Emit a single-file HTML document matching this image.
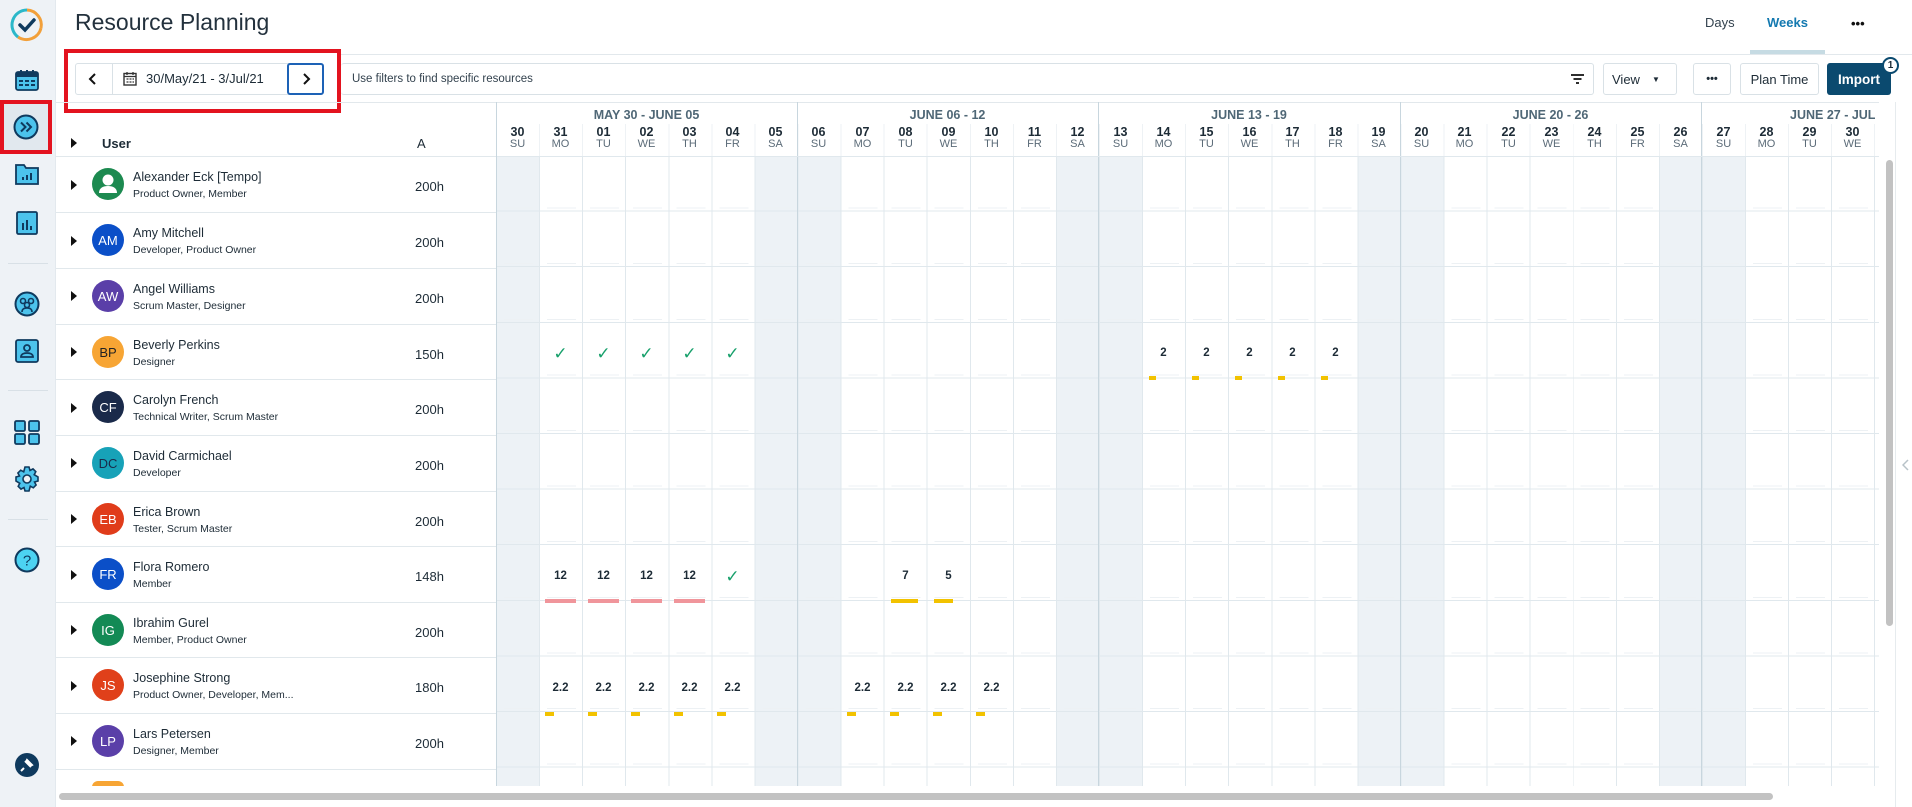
<!DOCTYPE html>
<html><head><meta charset="utf-8"><style>
*{box-sizing:border-box;margin:0;padding:0}
body{width:1912px;height:807px;overflow:hidden;background:#fff;font-family:"Liberation Sans",sans-serif;color:#1d2b36;position:relative}
.a{position:absolute}
.sb{left:0;top:0;width:56px;height:807px;background:#eef2f6;border-right:1px solid #e3e9ee}
.dv{left:8px;width:40px;height:1px;background:#d8e0e6}
.btn{border:1px solid #d9e1e6;border-radius:3px;background:#fff;font-size:14px;display:flex;align-items:center;justify-content:center}
.nm{font-size:12.5px;color:#1d2b36;left:133px}
.rl{font-size:10.5px;color:#1d2b36;left:133px}
.av{left:92px;width:32px;height:32px;border-radius:50%;color:#fff;font-size:13px;display:flex;align-items:center;justify-content:center}
.tri{left:71px;width:0;height:0;border-left:6px solid #111;border-top:5px solid transparent;border-bottom:5px solid transparent}
.hr{font-size:13px;left:415px}
.rowl{left:56px;width:440px;height:1px;background:#e1e8ec}
.dh{width:43px;text-align:center;top:126px;line-height:12px}
.dh b{display:block;font-size:12.5px;color:#1d2b36}
.dh span{display:block;font-size:11px;color:#5b6b78}
.wk{top:108px;font-size:12.5px;font-weight:bold;color:#4f6776;text-align:center}
.we{background:#edf2f6}
.val{width:43px;text-align:center;font-size:11.5px;font-weight:bold;color:#1d2b36}
.ck{width:43px;text-align:center;font-size:17px;color:#17a06b}
.bar{height:4px}
</style></head><body>

<!-- sidebar -->
<div class="a sb"></div>
<svg class="a" style="left:8px;top:6px" width="38" height="38" viewBox="0 0 38 38"><path d="M19 4 A15 15 0 0 1 33 22" stroke="#f2a03a" stroke-width="3" fill="none"/><path d="M33 22 A15 15 0 0 1 10 31" stroke="#f2a03a" stroke-width="3" fill="none"/><path d="M10 31 A15 15 0 0 1 19 4" stroke="#2bb8c9" stroke-width="3" fill="none"/><path d="M12 19 l5 5 l9 -10" stroke="#0f3a5e" stroke-width="3.5" fill="none" stroke-linecap="round"/></svg>
<svg class="a" style="left:15px;top:69px" width="24" height="22" viewBox="0 0 24 22"><rect x="1" y="3" width="22" height="18" rx="2" fill="#4cc3ec" stroke="#0f3a5e" stroke-width="1.8"/><rect x="1" y="3" width="22" height="5" fill="#0f3a5e"/><path d="M6 1v4M12 1v4M18 1v4" stroke="#0f3a5e" stroke-width="2"/><path d="M4 12h4M10 12h4M16 12h4M4 16h4M10 16h4M16 16h4" stroke="#0f3a5e" stroke-width="2"/></svg>
<div class="a" style="left:0;top:100px;width:52px;height:54px;border:4px solid #e3131f;background:#e1e8ee"></div>
<svg class="a" style="left:13px;top:114px" width="26" height="26" viewBox="0 0 26 26"><circle cx="13" cy="13" r="11.5" fill="#4cc3ec" stroke="#0f3a5e" stroke-width="2"/><path d="M8 8.5l4.5 4.5L8 17.5M13.5 8.5l4.5 4.5-4.5 4.5" stroke="#0f3a5e" stroke-width="2" fill="none"/></svg>
<svg class="a" style="left:15px;top:163px" width="24" height="22" viewBox="0 0 24 22"><path d="M1 2h8l2 3h12v16H1z" fill="#4cc3ec" stroke="#0f3a5e" stroke-width="1.8"/><path d="M8 17v-3M12 17v-5M16 17v-7" stroke="#0f3a5e" stroke-width="2"/></svg>
<svg class="a" style="left:16px;top:211px" width="22" height="24" viewBox="0 0 22 24"><rect x="1" y="1" width="20" height="22" rx="1.5" fill="#4cc3ec" stroke="#0f3a5e" stroke-width="1.8"/><path d="M7 19v-7M11 19v-10M15 19v-4" stroke="#0f3a5e" stroke-width="2"/></svg>
<div class="a dv" style="top:263px"></div>
<svg class="a" style="left:14px;top:291px" width="26" height="26" viewBox="0 0 26 26"><circle cx="13" cy="13" r="11.5" fill="#4cc3ec" stroke="#0f3a5e" stroke-width="2"/><circle cx="9" cy="10" r="2.5" fill="none" stroke="#0f3a5e" stroke-width="1.6"/><circle cx="17" cy="10" r="2.5" fill="none" stroke="#0f3a5e" stroke-width="1.6"/><circle cx="13" cy="14" r="2.5" fill="none" stroke="#0f3a5e" stroke-width="1.6"/><path d="M8 21c0-3 2-4 5-4s5 1 5 4" fill="none" stroke="#0f3a5e" stroke-width="1.6"/></svg>
<svg class="a" style="left:15px;top:339px" width="24" height="24" viewBox="0 0 24 24"><rect x="1" y="1" width="22" height="22" rx="2" fill="#4cc3ec" stroke="#0f3a5e" stroke-width="1.8"/><circle cx="12" cy="9" r="3" fill="none" stroke="#0f3a5e" stroke-width="1.8"/><path d="M6 18c0-3 3-4 6-4s6 1 6 4z" fill="none" stroke="#0f3a5e" stroke-width="1.8"/></svg>
<div class="a dv" style="top:390px"></div>
<svg class="a" style="left:14px;top:420px" width="26" height="25" viewBox="0 0 26 25"><rect x="1" y="1" width="10" height="10" rx="1.5" fill="#4cc3ec" stroke="#0f3a5e" stroke-width="1.8"/><rect x="15" y="1" width="10" height="10" rx="1.5" fill="#4cc3ec" stroke="#0f3a5e" stroke-width="1.8"/><rect x="1" y="14" width="10" height="10" rx="1.5" fill="#4cc3ec" stroke="#0f3a5e" stroke-width="1.8"/><rect x="15" y="14" width="10" height="10" rx="1.5" fill="#4cc3ec" stroke="#0f3a5e" stroke-width="1.8"/></svg>
<svg class="a" style="left:14px;top:466px" width="26" height="26" viewBox="0 0 26 26"><path d="M11 1h4l1 3.5 3-1.6 2.8 2.8-1.6 3L24 11v4l-3.5 1 1.6 3-2.8 2.8-3-1.6L15 25h-4l-1-3.5-3 1.6-2.8-2.8 1.6-3L2 15v-4l3.5-1-1.6-3 2.8-2.8 3 1.6z" fill="#4cc3ec" stroke="#0f3a5e" stroke-width="1.6"/><circle cx="13" cy="13" r="4" fill="#eef2f6" stroke="#0f3a5e" stroke-width="1.6"/></svg>
<div class="a dv" style="top:519px"></div>
<svg class="a" style="left:14px;top:547px" width="26" height="26" viewBox="0 0 26 26"><circle cx="13" cy="13" r="11.5" fill="#4cd3f2" stroke="#0f3a5e" stroke-width="2"/><text x="13" y="18.5" text-anchor="middle" font-size="15" font-family="Liberation Sans" fill="#0f3a5e">?</text></svg>
<svg class="a" style="left:15px;top:753px" width="24" height="24" viewBox="0 0 24 24"><circle cx="12" cy="12" r="12" fill="#0f3a5e"/><path d="M9 15l-3 3M10 8l6 6M12 7l5 5-2 1-4-4z" stroke="#fff" stroke-width="2" fill="#fff"/></svg>

<!-- title -->
<div class="a" style="left:75px;top:9px;font-size:23px;color:#23313d">Resource Planning</div>
<div class="a" style="left:1705px;top:15px;font-size:13px;color:#33424e">Days</div>
<div class="a" style="left:1767px;top:15px;font-size:13px;font-weight:bold;color:#1379b0">Weeks</div>
<div class="a" style="left:1851px;top:16px;font-size:13px;font-weight:bold;color:#111;letter-spacing:0px">•••</div>
<div class="a" style="left:341px;top:54px;width:1571px;height:1px;background:#e2e8ec"></div>
<div class="a" style="left:1750px;top:50px;width:75px;height:4px;background:#c6dbe3"></div>

<!-- toolbar -->
<div class="a" style="left:64px;top:49px;width:277px;height:64px;border:4px solid #e3131f"></div>
<div class="a btn" style="left:75px;top:63px;width:248px;height:32px"></div>
<div class="a" style="left:112px;top:64px;width:1px;height:30px;background:#d9e1e6"></div>
<svg class="a" style="left:86px;top:72px" width="14" height="14" viewBox="0 0 14 14"><path d="M9 2L4 7l5 5" stroke="#111" stroke-width="2" fill="none"/></svg>
<svg class="a" style="left:123px;top:71px" width="14" height="15" viewBox="0 0 14 15"><rect x="1" y="2.5" width="12" height="11.5" fill="none" stroke="#333" stroke-width="1.4"/><path d="M1 5.5h12M4 1v3M10 1v3M3.5 8h2M6.5 8h2M9.5 8h1.5M3.5 11h2M6.5 11h2M9.5 11h1.5" stroke="#333" stroke-width="1.3"/></svg>
<div class="a" style="left:146px;top:71px;font-size:13px;color:#1d2b36">30/May/21 - 3/Jul/21</div>
<div class="a" style="left:287px;top:63px;width:37px;height:32px;border:2px solid #1d62b6;border-radius:3px;background:#fff"></div>
<svg class="a" style="left:299px;top:72px" width="14" height="14" viewBox="0 0 14 14"><path d="M5 2l5 5-5 5" stroke="#111" stroke-width="2" fill="none"/></svg>
<div class="a btn" style="left:341px;top:63px;width:1253px;height:32px;border-left:none"></div>
<div class="a" style="left:352px;top:73px;font-size:11.5px;color:#33424e">Use filters to find specific resources</div>
<svg class="a" style="left:1571px;top:74px" width="13" height="10" viewBox="0 0 13 10"><path d="M0 1h13M2.5 5h8M5 9h3" stroke="#111" stroke-width="1.8"/></svg>
<div class="a btn" style="left:1603px;top:63px;width:74px;height:32px;font-size:13px;justify-content:flex-start;padding-left:8px">View<span style="font-size:8px;margin-left:12px">▼</span></div>
<div class="a btn" style="left:1693px;top:63px;width:38px;height:32px;font-size:11px;font-weight:bold">•••</div>
<div class="a btn" style="left:1740px;top:63px;width:79px;height:32px;font-size:13px">Plan Time</div>
<div class="a" style="left:1827px;top:63px;width:64px;height:32px;background:#0b4a6f;border-radius:3px;color:#fff;font-size:13.5px;font-weight:bold;display:flex;align-items:center;justify-content:center">Import</div>
<div class="a" style="left:1882px;top:57px;width:17px;height:17px;border-radius:50%;background:#fff;border:2px solid #0b4a6f;font-size:10px;font-weight:bold;display:flex;align-items:center;justify-content:center">1</div>
<div class="a" style="left:56px;top:102px;width:1823px;height:1px;background:#e2e8ec"></div>

<!-- left list -->
<div class="a tri" style="top:138px"></div>
<div class="a" style="left:102px;top:136px;font-size:13px;font-weight:bold">User</div>
<div class="a" style="left:417px;top:136px;font-size:13px">A</div>
<div class="a" style="left:496px;top:102px;width:1px;height:690px;background:#c8d6de"></div>
<div class="a rowl" style="top:156px"></div>

<div class="a tri" style="top:180px"></div><div class="a av" style="top:168px;background:#1c8a50"><svg width="32" height="32" viewBox="0 0 32 32"><circle cx="16" cy="12" r="5.5" fill="#fff"/><path d="M7 25c0-5 4-7 9-7s9 2 9 7z" fill="#fff"/></svg></div><div class="a nm" style="top:170px">Alexander Eck [Tempo]</div><div class="a rl" style="top:188px">Product Owner, Member</div><div class="a hr" style="top:179px">200h</div><div class="a rowl" style="top:212px"></div>
<div class="a tri" style="top:236px"></div><div class="a av" style="top:224px;background:#0b4fc8">AM</div><div class="a nm" style="top:226px">Amy Mitchell</div><div class="a rl" style="top:244px">Developer, Product Owner</div><div class="a hr" style="top:235px">200h</div><div class="a rowl" style="top:268px"></div>
<div class="a tri" style="top:291px"></div><div class="a av" style="top:280px;background:#5a3fa8">AW</div><div class="a nm" style="top:282px">Angel Williams</div><div class="a rl" style="top:300px">Scrum Master, Designer</div><div class="a hr" style="top:291px">200h</div><div class="a rowl" style="top:324px"></div>
<div class="a tri" style="top:347px"></div><div class="a av" style="top:336px;background:#f7a534;color:#222">BP</div><div class="a nm" style="top:338px">Beverly Perkins</div><div class="a rl" style="top:356px">Designer</div><div class="a hr" style="top:347px">150h</div><div class="a rowl" style="top:379px"></div>
<div class="a tri" style="top:403px"></div><div class="a av" style="top:391px;background:#1a2a4a">CF</div><div class="a nm" style="top:393px">Carolyn French</div><div class="a rl" style="top:411px">Technical Writer, Scrum Master</div><div class="a hr" style="top:402px">200h</div><div class="a rowl" style="top:435px"></div>
<div class="a tri" style="top:458px"></div><div class="a av" style="top:447px;background:#17a2b8;color:#1a2a4a">DC</div><div class="a nm" style="top:449px">David Carmichael</div><div class="a rl" style="top:467px">Developer</div><div class="a hr" style="top:458px">200h</div><div class="a rowl" style="top:491px"></div>
<div class="a tri" style="top:514px"></div><div class="a av" style="top:503px;background:#e03c1a">EB</div><div class="a nm" style="top:505px">Erica Brown</div><div class="a rl" style="top:523px">Tester, Scrum Master</div><div class="a hr" style="top:514px">200h</div><div class="a rowl" style="top:546px"></div>
<div class="a tri" style="top:570px"></div><div class="a av" style="top:558px;background:#0b4fc8">FR</div><div class="a nm" style="top:560px">Flora Romero</div><div class="a rl" style="top:578px">Member</div><div class="a hr" style="top:569px">148h</div><div class="a rowl" style="top:602px"></div>
<div class="a tri" style="top:625px"></div><div class="a av" style="top:614px;background:#138a55">IG</div><div class="a nm" style="top:616px">Ibrahim Gurel</div><div class="a rl" style="top:634px">Member, Product Owner</div><div class="a hr" style="top:625px">200h</div><div class="a rowl" style="top:657px"></div>
<div class="a tri" style="top:681px"></div><div class="a av" style="top:669px;background:#e0401a">JS</div><div class="a nm" style="top:671px">Josephine Strong</div><div class="a rl" style="top:689px">Product Owner, Developer, Mem...</div><div class="a hr" style="top:680px">180h</div><div class="a rowl" style="top:713px"></div>
<div class="a tri" style="top:736px"></div><div class="a av" style="top:725px;background:#5a3fa8">LP</div><div class="a nm" style="top:727px">Lars Petersen</div><div class="a rl" style="top:745px">Designer, Member</div><div class="a hr" style="top:736px">200h</div><div class="a rowl" style="top:769px"></div>
<div class="a av" style="top:781px;height:6px;border-radius:16px 16px 0 0;background:#f7a534"></div>

<!-- grid -->
<div class="a" style="left:497px;top:102px;width:1382px;height:684px;overflow:hidden">
 <div class="a we" style="left:0;top:54px;width:43px;height:640px"></div>
 <div class="a we" style="left:258px;top:54px;width:86px;height:640px"></div>
 <div class="a we" style="left:560px;top:54px;width:86px;height:640px"></div>
 <div class="a we" style="left:861px;top:54px;width:86px;height:640px"></div>
 <div class="a we" style="left:1163px;top:54px;width:86px;height:640px"></div>
 <div class="a" style="left:0;top:22px;width:1382px;height:662px;background:repeating-linear-gradient(90deg,transparent 0 42.07px,#e0e8ed 42.07px 43.07px)"></div>
 <div class="a" style="left:0;top:54px;width:1382px;height:640px;background:repeating-linear-gradient(180deg,transparent 0 54.6px,#e0e8ed 54.6px 55.6px)"></div>
 <div class="a" style="left:0;top:54px;width:1382px;height:640px;background:repeating-linear-gradient(180deg,transparent 0 51.6px,#edf1f4 51.6px 52.6px,transparent 52.6px 55.6px);-webkit-mask-image:repeating-linear-gradient(90deg,transparent 0 7px,#000 7px 36px,transparent 36px 43.07px);mask-image:repeating-linear-gradient(90deg,transparent 0 7px,#000 7px 36px,transparent 36px 43.07px)"></div>
 <div class="a" style="left:300px;top:0;width:1px;height:684px;background:#c8d6de"></div>
 <div class="a" style="left:601px;top:0;width:1px;height:684px;background:#c8d6de"></div>
 <div class="a" style="left:903px;top:0;width:1px;height:684px;background:#c8d6de"></div>
 <div class="a" style="left:1204px;top:0;width:1px;height:684px;background:#c8d6de"></div>
 <div class="a" style="left:0;top:54px;width:1382px;height:1px;background:#e0e8ed"></div>
 <div class="a" style="left:0;top:22px;width:1382px;height:32px;background:#fff"></div>
 <div class="a" style="left:0;top:22px;width:1382px;height:32px;background:repeating-linear-gradient(90deg,transparent 0 42.07px,#eef2f5 42.07px 43.07px)"></div>
 <div class="a" style="left:300px;top:0;width:1px;height:54px;background:#c8d6de"></div>
 <div class="a" style="left:601px;top:0;width:1px;height:54px;background:#c8d6de"></div>
 <div class="a" style="left:903px;top:0;width:1px;height:54px;background:#c8d6de"></div>
 <div class="a" style="left:1204px;top:0;width:1px;height:54px;background:#c8d6de"></div>
</div>
<div class="a wk" style="left:496px;width:301px">MAY 30 - JUNE 05</div>
<div class="a wk" style="left:797px;width:301px">JUNE 06 - 12</div>
<div class="a wk" style="left:1098px;width:302px">JUNE 13 - 19</div>
<div class="a wk" style="left:1400px;width:301px">JUNE 20 - 26</div>
<div class="a wk" style="left:1790px;width:89px;text-align:left;overflow:hidden;white-space:nowrap">JUNE 27 - JUL</div>

<div class="a dh" style="left:496px"><b>30</b><span>SU</span></div>
<div class="a dh" style="left:539px"><b>31</b><span>MO</span></div>
<div class="a dh" style="left:582px"><b>01</b><span>TU</span></div>
<div class="a dh" style="left:625px"><b>02</b><span>WE</span></div>
<div class="a dh" style="left:668px"><b>03</b><span>TH</span></div>
<div class="a dh" style="left:711px"><b>04</b><span>FR</span></div>
<div class="a dh" style="left:754px"><b>05</b><span>SA</span></div>
<div class="a dh" style="left:797px"><b>06</b><span>SU</span></div>
<div class="a dh" style="left:841px"><b>07</b><span>MO</span></div>
<div class="a dh" style="left:884px"><b>08</b><span>TU</span></div>
<div class="a dh" style="left:927px"><b>09</b><span>WE</span></div>
<div class="a dh" style="left:970px"><b>10</b><span>TH</span></div>
<div class="a dh" style="left:1013px"><b>11</b><span>FR</span></div>
<div class="a dh" style="left:1056px"><b>12</b><span>SA</span></div>
<div class="a dh" style="left:1099px"><b>13</b><span>SU</span></div>
<div class="a dh" style="left:1142px"><b>14</b><span>MO</span></div>
<div class="a dh" style="left:1185px"><b>15</b><span>TU</span></div>
<div class="a dh" style="left:1228px"><b>16</b><span>WE</span></div>
<div class="a dh" style="left:1271px"><b>17</b><span>TH</span></div>
<div class="a dh" style="left:1314px"><b>18</b><span>FR</span></div>
<div class="a dh" style="left:1357px"><b>19</b><span>SA</span></div>
<div class="a dh" style="left:1400px"><b>20</b><span>SU</span></div>
<div class="a dh" style="left:1443px"><b>21</b><span>MO</span></div>
<div class="a dh" style="left:1487px"><b>22</b><span>TU</span></div>
<div class="a dh" style="left:1530px"><b>23</b><span>WE</span></div>
<div class="a dh" style="left:1573px"><b>24</b><span>TH</span></div>
<div class="a dh" style="left:1616px"><b>25</b><span>FR</span></div>
<div class="a dh" style="left:1659px"><b>26</b><span>SA</span></div>
<div class="a dh" style="left:1702px"><b>27</b><span>SU</span></div>
<div class="a dh" style="left:1745px"><b>28</b><span>MO</span></div>
<div class="a dh" style="left:1788px"><b>29</b><span>TU</span></div>
<div class="a dh" style="left:1831px"><b>30</b><span>WE</span></div>

<!-- Beverly -->
<div class="a ck" style="left:539px;top:344px">✓</div>
<div class="a ck" style="left:582px;top:344px">✓</div>
<div class="a ck" style="left:625px;top:344px">✓</div>
<div class="a ck" style="left:668px;top:344px">✓</div>
<div class="a ck" style="left:711px;top:344px">✓</div>
<div class="a val" style="left:1142px;top:347px">2</div><div class="a bar" style="left:1149px;top:376px;width:7px;background:#f2c200"></div>
<div class="a val" style="left:1185px;top:347px">2</div><div class="a bar" style="left:1192px;top:376px;width:7px;background:#f2c200"></div>
<div class="a val" style="left:1228px;top:347px">2</div><div class="a bar" style="left:1235px;top:376px;width:7px;background:#f2c200"></div>
<div class="a val" style="left:1271px;top:347px">2</div><div class="a bar" style="left:1278px;top:376px;width:7px;background:#f2c200"></div>
<div class="a val" style="left:1314px;top:347px">2</div><div class="a bar" style="left:1321px;top:376px;width:7px;background:#f2c200"></div>
<!-- Flora -->
<div class="a val" style="left:539px;top:570px">12</div><div class="a bar" style="left:545px;top:599px;width:31px;background:#f0959b"></div>
<div class="a val" style="left:582px;top:570px">12</div><div class="a bar" style="left:588px;top:599px;width:31px;background:#f0959b"></div>
<div class="a val" style="left:625px;top:570px">12</div><div class="a bar" style="left:631px;top:599px;width:31px;background:#f0959b"></div>
<div class="a val" style="left:668px;top:570px">12</div><div class="a bar" style="left:674px;top:599px;width:31px;background:#f0959b"></div>
<div class="a ck" style="left:711px;top:567px">✓</div>
<div class="a val" style="left:884px;top:570px">7</div><div class="a bar" style="left:891px;top:599px;width:27px;background:#f2c200"></div>
<div class="a val" style="left:927px;top:570px">5</div><div class="a bar" style="left:934px;top:599px;width:19px;background:#f2c200"></div>
<!-- Josephine -->
<div class="a val" style="left:539px;top:682px">2.2</div><div class="a bar" style="left:545px;top:712px;width:9px;background:#f2c200"></div>
<div class="a val" style="left:582px;top:682px">2.2</div><div class="a bar" style="left:588px;top:712px;width:9px;background:#f2c200"></div>
<div class="a val" style="left:625px;top:682px">2.2</div><div class="a bar" style="left:631px;top:712px;width:9px;background:#f2c200"></div>
<div class="a val" style="left:668px;top:682px">2.2</div><div class="a bar" style="left:674px;top:712px;width:9px;background:#f2c200"></div>
<div class="a val" style="left:711px;top:682px">2.2</div><div class="a bar" style="left:717px;top:712px;width:9px;background:#f2c200"></div>
<div class="a val" style="left:841px;top:682px">2.2</div><div class="a bar" style="left:847px;top:712px;width:9px;background:#f2c200"></div>
<div class="a val" style="left:884px;top:682px">2.2</div><div class="a bar" style="left:890px;top:712px;width:9px;background:#f2c200"></div>
<div class="a val" style="left:927px;top:682px">2.2</div><div class="a bar" style="left:933px;top:712px;width:9px;background:#f2c200"></div>
<div class="a val" style="left:970px;top:682px">2.2</div><div class="a bar" style="left:976px;top:712px;width:9px;background:#f2c200"></div>

<!-- scrollbars -->
<div class="a" style="left:56px;top:786px;width:1823px;height:21px;background:#fff"></div>
<div class="a" style="left:59px;top:793px;width:1714px;height:7px;border-radius:4px;background:#c2c2c2"></div>
<div class="a" style="left:1886px;top:160px;width:7px;height:466px;border-radius:4px;background:#c2c2c2"></div>
<div class="a" style="left:1895px;top:102px;width:1px;height:705px;background:#e6ebee"></div>
<svg class="a" style="left:1902px;top:459px" width="8" height="12" viewBox="0 0 8 12"><path d="M6 1L1 6l5 5" stroke="#b8c2c8" stroke-width="1.5" fill="none"/></svg>
</body></html>
